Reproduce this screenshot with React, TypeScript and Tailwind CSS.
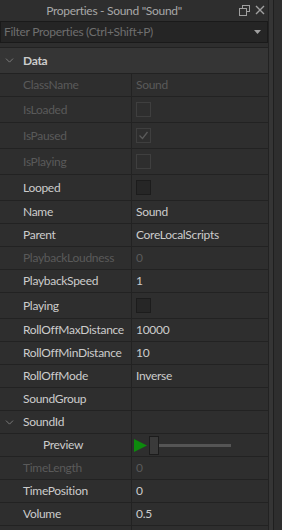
import { ChevronDown } from 'lucide-react';

type Row = {
  name: string;
  kind: 'text' | 'check' | 'preview' | 'group';
  value?: string;
  checked?: boolean;
  disabled?: boolean;
  indent?: boolean;
};

const rows: Row[] = [
  { name: 'ClassName', kind: 'text', value: 'Sound', disabled: true },
  { name: 'IsLoaded', kind: 'check', disabled: true },
  { name: 'IsPaused', kind: 'check', checked: true, disabled: true },
  { name: 'IsPlaying', kind: 'check', disabled: true },
  { name: 'Looped', kind: 'check' },
  { name: 'Name', kind: 'text', value: 'Sound' },
  { name: 'Parent', kind: 'text', value: 'CoreLocalScripts' },
  { name: 'PlaybackLoudness', kind: 'text', value: '0', disabled: true },
  { name: 'PlaybackSpeed', kind: 'text', value: '1' },
  { name: 'Playing', kind: 'check' },
  { name: 'RollOffMaxDistance', kind: 'text', value: '10000' },
  { name: 'RollOffMinDistance', kind: 'text', value: '10' },
  { name: 'RollOffMode', kind: 'text', value: 'Inverse' },
  { name: 'SoundGroup', kind: 'text', value: '' },
  { name: 'SoundId', kind: 'group', value: '' },
  { name: 'Preview', kind: 'preview', indent: true },
  { name: 'TimeLength', kind: 'text', value: '0', disabled: true },
  { name: 'TimePosition', kind: 'text', value: '0' },
  { name: 'Volume', kind: 'text', value: '0.5' },
  { name: '', kind: 'text', value: '' },
];

function Checkbox({ checked, disabled }: { checked?: boolean; disabled?: boolean }) {
  return (
    <div
      className={
        disabled
          ? 'w-[15px] h-[15px] border border-[#3f3f3f] bg-[#2e2e2e] flex items-center justify-center'
          : 'w-[15px] h-[15px] border border-[#1c1c1c] bg-[#262626] flex items-center justify-center'
      }
    >
      {checked && (
        <svg width="11" height="11" viewBox="0 0 11 11">
          <path d="M1.5 5.5 L4.5 8.5 L9.5 2" fill="none" stroke="#5a5a5a" strokeWidth="1.3" />
        </svg>
      )}
    </div>
  );
}

function PropRow({ row }: { row: Row }) {
  const h = row.kind === 'check' ? 'h-[26px]' : 'h-[23px]';
  const labelColor = row.disabled ? 'text-[#5a5a5a]' : 'text-[#cccccc]';
  return (
    <div className={`flex shrink-0 ${h} border-b border-[#222222]`}>
      <div className="w-[132px] shrink-0 flex items-center border-r border-[#222222] relative">
        {row.kind === 'group' && (
          <ChevronDown className="absolute left-[3px] w-[13px] h-[13px] text-[#8a8a8a]" strokeWidth={1.5} />
        )}
        <span className={`${row.indent ? 'pl-[43px]' : 'pl-[23px]'} ${labelColor} whitespace-nowrap`}>{row.name}</span>
      </div>
      <div className="flex-1 flex items-center pl-[4px]">
        {row.kind === 'text' && <span className={labelColor}>{row.value}</span>}
        {row.kind === 'check' && <Checkbox checked={row.checked} disabled={row.disabled} />}
        {row.kind === 'preview' && (
          <div className="flex items-center">
            <svg width="13" height="13" viewBox="0 0 13 13" className="ml-[-2px]">
              <polygon points="0,0 13,6.5 0,13" fill="#0d8a0d" />
            </svg>
            <div className="w-[10px] h-[19px] bg-[#3a3a3a] border border-[#1c1c1c] ml-[2px]" />
            <div className="w-[72px] h-[3px] bg-[#555555]" />
          </div>
        )}
      </div>
    </div>
  );
}

export default function App() {
  return (
    <div className="w-[282px] h-[530px] bg-[#2e2e2e] flex overflow-hidden text-[12px] tracking-[-0.3px] font-['Lato',sans-serif]">
      <div className="w-[268px] shrink-0 flex flex-col">
        <div className="h-[21px] shrink-0 flex items-center relative">
          <span className="w-full text-center text-[#a8a8a8] pr-[40px]">Properties - Sound "Sound"</span>
          <svg width="11" height="11" viewBox="0 0 11 11" className="absolute left-[239px] top-[5px]">
            <rect x="3.5" y="0.5" width="7" height="6" fill="none" stroke="#a0a0a0" />
            <rect x="0.5" y="3.5" width="7" height="7" fill="#2e2e2e" stroke="#a0a0a0" />
          </svg>
          <svg width="10" height="10" viewBox="0 0 10 10" className="absolute left-[255px] top-[5px]">
            <path d="M1 1 L9 9 M9 1 L1 9" stroke="#a0a0a0" strokeWidth="1.4" />
          </svg>
        </div>
        <div className="h-[22px] shrink-0 bg-[#252525] border border-[#1a1a1a] flex items-center justify-between pl-[3px] pr-[6px]">
          <span className="text-[#6e6e6e]">Filter Properties (Ctrl+Shift+P)</span>
          <svg width="7" height="4" viewBox="0 0 7 4">
            <polygon points="0,0 7,0 3.5,4" fill="#a0a0a0" />
          </svg>
        </div>
        <div className="h-[4px] shrink-0" />
        <div className="h-[27px] shrink-0 bg-[#353535] border-y border-[#222222] flex items-center relative">
          <ChevronDown className="absolute left-[3px] w-[13px] h-[13px] text-[#8a8a8a]" strokeWidth={1.5} />
          <span className="pl-[23px] font-bold text-[#cccccc]">Data</span>
        </div>
        {rows.map((r, i) => (
          <PropRow key={i} row={r} />
        ))}
      </div>
      <div className="w-[5px] shrink-0 bg-[#353535] border-l border-[#222222]" />
      <div className="w-px shrink-0 bg-[#1f1f1f]" />
      <div className="flex-1 bg-[#2e2e2e]" />
    </div>
  );
}
